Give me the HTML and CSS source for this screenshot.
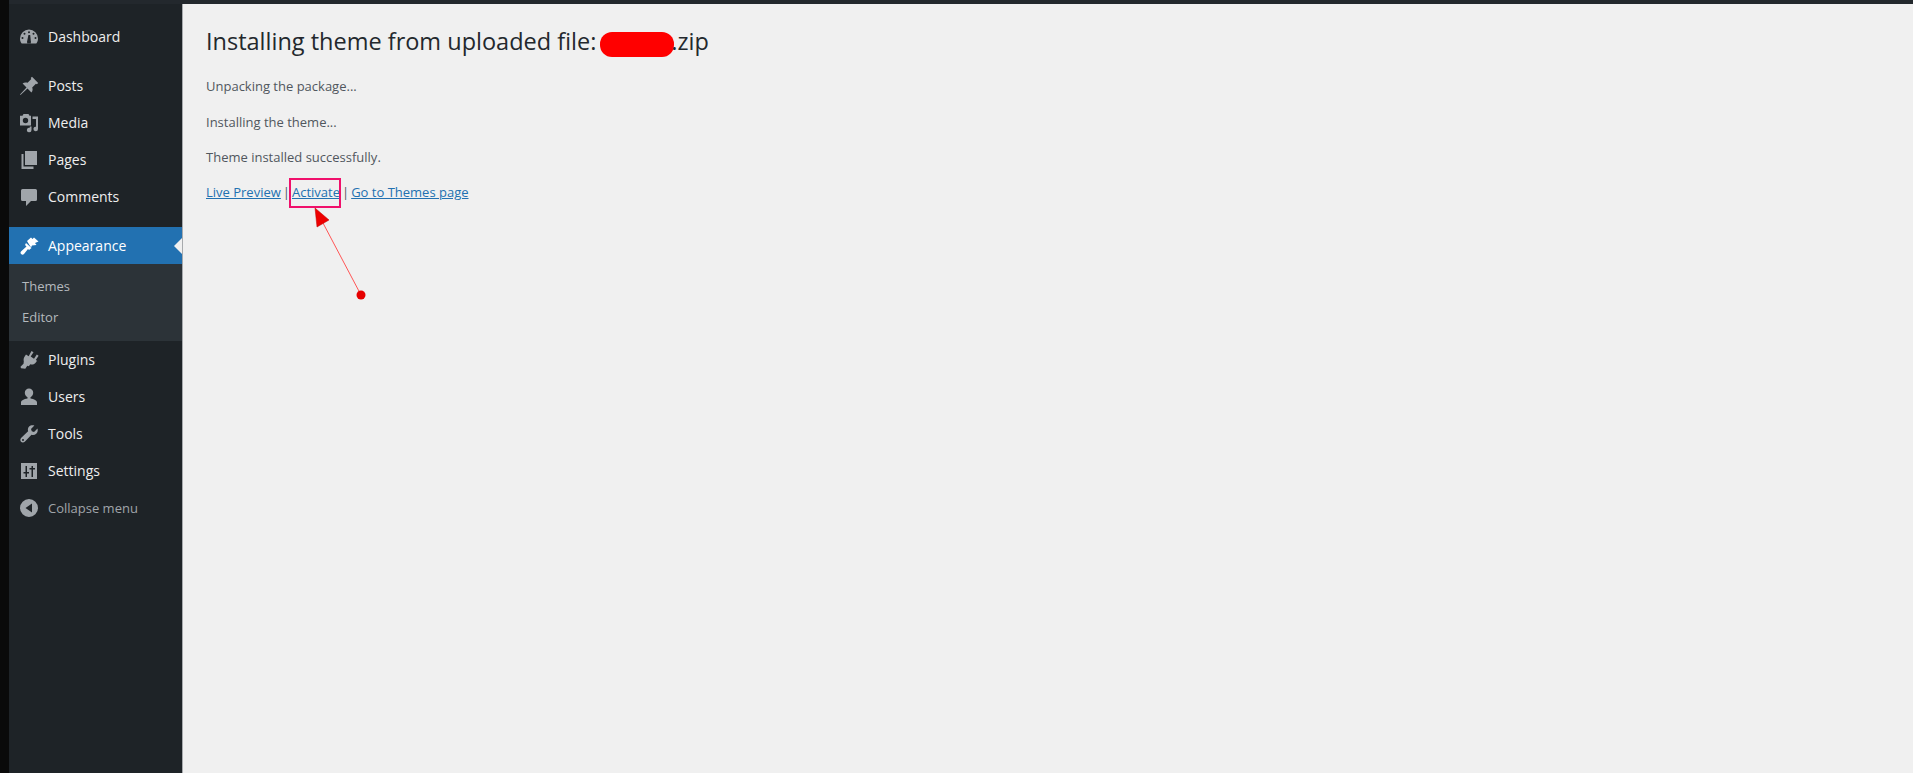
FILE: index.html
```html
<!DOCTYPE html>
<html lang="en">
<head>
    <meta charset="UTF-8">
    <title>Install Themes</title>
    <link rel="stylesheet" href="styles.css">
</head>
<body>
    <div class="topbar"></div>
    <div class="wrap">
        <aside class="sidebar">
            <ul class="menu">
                <li class="item first">
                    <svg class="icon" viewBox="0 0 20 20"><path d="M10 2.500A9 9 0 0 0 1 11.500c0 2 .6 3.700 1.700 5h14.600c1.100-1.300 1.700-3 1.700-5a9 9 0 0 0-9-9zM10 4.200a1 1 0 1 1 0 2 1 1 0 0 1 0-2zM5.500 5.800a1 1 0 1 1 0 2 1 1 0 0 1 0-2zM14.500 5.800a1 1 0 1 1 0 2 1 1 0 0 1 0-2zM3.500 10a1 1 0 1 1 0 2 1 1 0 0 1 0-2zM16.500 10a1 1 0 1 1 0 2 1 1 0 0 1 0-2zM11.200 8l.6 6a2 2 0 1 1-3.600 0l1.200-6z" fill-rule="evenodd"/></svg>
                    <span>Dashboard</span>
                </li>
                <li class="item gap">
                    <svg class="icon" viewBox="0 0 20 20"><path d="M13 .8l6.200 6.200-1.300 1.300-1-.6-3.700 3.700c.8 2 .4 3.700-.8 5L8.500 12.500 1.500 19l-.5-.5 6.500-7L3.600 7.600c1.300-1.200 3-1.600 5-.8l3.700-3.700-.6-1z"/></svg>
                    <span>Posts</span>
                </li>
                <li class="item">
                    <svg class="icon" viewBox="0 0 20 20"><path fill-rule="evenodd" d="M4.500 1h5l1 1.800h1.500v9.700H1V2.800h2.500zM6.500 4.800a2.700 2.700 0 1 0 0 5.400 2.700 2.700 0 0 0 0-5.400zM13.500 3.500h5.500v12.500a2.300 2.300 0 1 1-2-2.300V6h-3.500zM10.800 13.500h1.700v3.500a2.300 2.300 0 1 1-1.700-2.200z"/></svg>
                    <span>Media</span>
                </li>
                <li class="item">
                    <svg class="icon" viewBox="0 0 20 20"><path d="M6 1h12v14H6z"/><path d="M4.500 4H2.500v15h12v-2.500H4.500z"/></svg>
                    <span>Pages</span>
                </li>
                <li class="item">
                    <svg class="icon" viewBox="0 0 20 20"><path d="M3.500 2h13A1.500 1.500 0 0 1 18 3.500v9a1.500 1.500 0 0 1-1.500 1.500H12l-5 5v-5H3.500A1.500 1.500 0 0 1 2 12.500v-9A1.500 1.500 0 0 1 3.500 2z"/></svg>
                    <span>Comments</span>
                </li>
                <li class="item current">
                    <svg class="icon" viewBox="0 0 20 20"><path d="M8 5l4-3.500 1.500 1.500L15 1.500l4.500 4-3.500 1.500 1.500 2-4.500.5-1 2z"/><path d="M7 7l5.500 5-2.500 2-1-1-4 5c-1.200 1.500-3.500.5-3.500-1.500 0-.5.500-1 1-1.500l5-4.500L6 9z"/></svg>
                    <span>Appearance</span>
                </li>
                <li class="submenu">
                    <a class="subitem">Themes</a>
                    <a class="subitem">Editor</a>
                </li>
                <li class="item">
                    <svg class="icon" viewBox="0 0 20 20"><path d="M12.500 1l2 1.300-2.800 4.200 3.300 2.200 2.800-4.200 1.800 1.300-2.800 4.200 1.200.8-1 1.500c-1.400 2-3.700 2.800-5.700 2l-1.500 2-1.500-.5-2 2.900-4.300-.5-.5-1.500 3-3L4.800 11.500c-.5-2 0-4 1.200-5.500l1-1.500 2.700 1.800z"/></svg>
                    <span>Plugins</span>
                </li>
                <li class="item">
                    <svg class="icon" viewBox="0 0 20 20"><path d="M10 1.500a4.200 4.200 0 0 1 4.200 4.200c0 2-1.300 3.800-2.700 4.500v1.300c3.500.6 6.500 2 6.500 4V18H2v-2.500c0-2 3-3.400 6.500-4v-1.300C7.100 9.500 5.800 7.700 5.800 5.700A4.200 4.200 0 0 1 10 1.500z"/></svg>
                    <span>Users</span>
                </li>
                <li class="item">
                    <svg class="icon" viewBox="0 0 20 20"><path fill-rule="evenodd" d="M18.500 4.500c.6 2 .1 4-1.300 5.200-1.300 1.200-3 1.500-4.700 1L6 17.500c-1 1.200-3 1.300-4 .3s-.9-3 .3-4l6.800-6.500c-.5-1.700-.2-3.400 1-4.700C11.300 1.200 13.500.8 15.400 1.500L12 5l.8 2.200 2.200.8zM4 15a1 1 0 1 0 0 2 1 1 0 0 0 0-2z"/></svg>
                    <span>Tools</span>
                </li>
                <li class="item">
                    <svg class="icon" viewBox="0 0 20 20"><path fill-rule="evenodd" d="M2 2h16v16H2zM6.500 5v6H4.500v1.500h2V16H8v-3.500h2V11H8V5zM12.500 5v2h-2v1.500h2V16H14V8.500h2V7h-2V5z"/></svg>
                    <span>Settings</span>
                </li>
                <li class="item collapse">
                    <svg class="icon" viewBox="0 0 20 20"><path fill-rule="evenodd" d="M10 1a9 9 0 1 1 0 18 9 9 0 0 1 0-18zM13 5.500L6.500 10l6.500 4.500z"/></svg>
                    <span>Collapse menu</span>
                </li>
            </ul>
        </aside>
        <main class="content">
            <h1>Installing theme from uploaded file:<span class="blot"></span>.zip</h1>
            <p>Unpacking the package...</p>
            <p>Installing the theme...</p>
            <p>Theme installed successfully.</p>
            <p class="actions"><a href="#">Live Preview</a><span class="sep">|</span><span class="mark"><a href="#">Activate</a><span class="box"></span><svg class="arrow" width="60" height="100" viewBox="0 0 60 100"><path d="M11 16L49 88" stroke="#f55" stroke-width="1" fill="none"/><path d="M3 1L5 20 17 13z" fill="#e00" stroke="#b00" stroke-width=".5"/><circle cx="49" cy="88" r="4.500" fill="#e60000"/></svg></span><span class="sep">|</span><a href="#">Go to Themes page</a></p>
        </main>
    </div>
</body>
</html>
```

FILE: styles.css
```css
* {
    margin: 0;
    padding: 0;
    box-sizing: border-box;
}

html, body {
    height: 100%;
    overflow: hidden;
}

body {
    font-family: 'Open Sans', sans-serif;
    font-size: 13px;
    background-color: #0a0a0a;
    padding-left: 9px;
    display: flex;
    flex-direction: column;
}

.topbar {
    height: 4px;
    background: #23282d;
    flex: none;
}

.wrap {
    display: flex;
    flex: 1;
}

/* Sidebar */
.sidebar {
    width: 174px;
    background: #1e2327;
    border-right: 1px solid #a7aaad;
    flex: none;
}

.menu {
    list-style: none;
    padding-top: 14px;
}

.item {
    display: flex;
    align-items: center;
    height: 37px;
    padding-left: 10px;
    color: #eee;
    font-size: 14px;
    position: relative;
}

.item.gap {
    margin-top: 12px;
}

.icon {
    width: 20px;
    height: 20px;
    fill: #a0a5aa;
    margin-right: 9px;
    flex: none;
}

.item.current {
    margin-top: 12px;
    background: #2271b1;
    color: #fff;
}

.item.current .icon {
    fill: #fff;
}

.item.current::after {
    content: "";
    position: absolute;
    right: 0;
    top: 50%;
    margin-top: -8px;
    border: 8px solid transparent;
    border-right-color: #f0f0f0;
}

.submenu {
    background: #2c3338;
    padding: 7px 0 8px;
    display: flex;
    flex-direction: column;
}

.subitem {
    height: 31px;
    line-height: 31px;
    padding-left: 13px;
    font-size: 13px;
    color: #b4b9be;
}

.item.collapse {
    color: #a0a5aa;
    font-size: 13px;
}

/* Main */
.content {
    flex: 1;
    background: #f0f0f0;
    padding: 20px 23px;
    color: #50575e;
}

h1 {
    font-size: 23.5px;
    font-weight: 400;
    color: #23282d;
    line-height: 34px;
    margin-bottom: 19px;
}

.blot {
    display: inline-block;
    width: 74px;
    height: 25px;
    background: #f00;
    border-radius: 12px;
    margin: 0 -3px 0 4px;
    vertical-align: -7px;
}

.content p {
    margin-bottom: 17.5px;
    line-height: 18px;
}

.content .actions {
    margin-top: -1px;
}

.content a {
    color: #2271b1;
}

.sep {
    margin: 0 2px;
}

.mark {
    position: relative;
}

.box {
    position: absolute;
    left: -3px;
    top: -5px;
    width: 52px;
    height: 30px;
    border: 2px solid #f0106b;
}

.arrow {
    position: absolute;
    left: 20px;
    top: 24px;
}
```
